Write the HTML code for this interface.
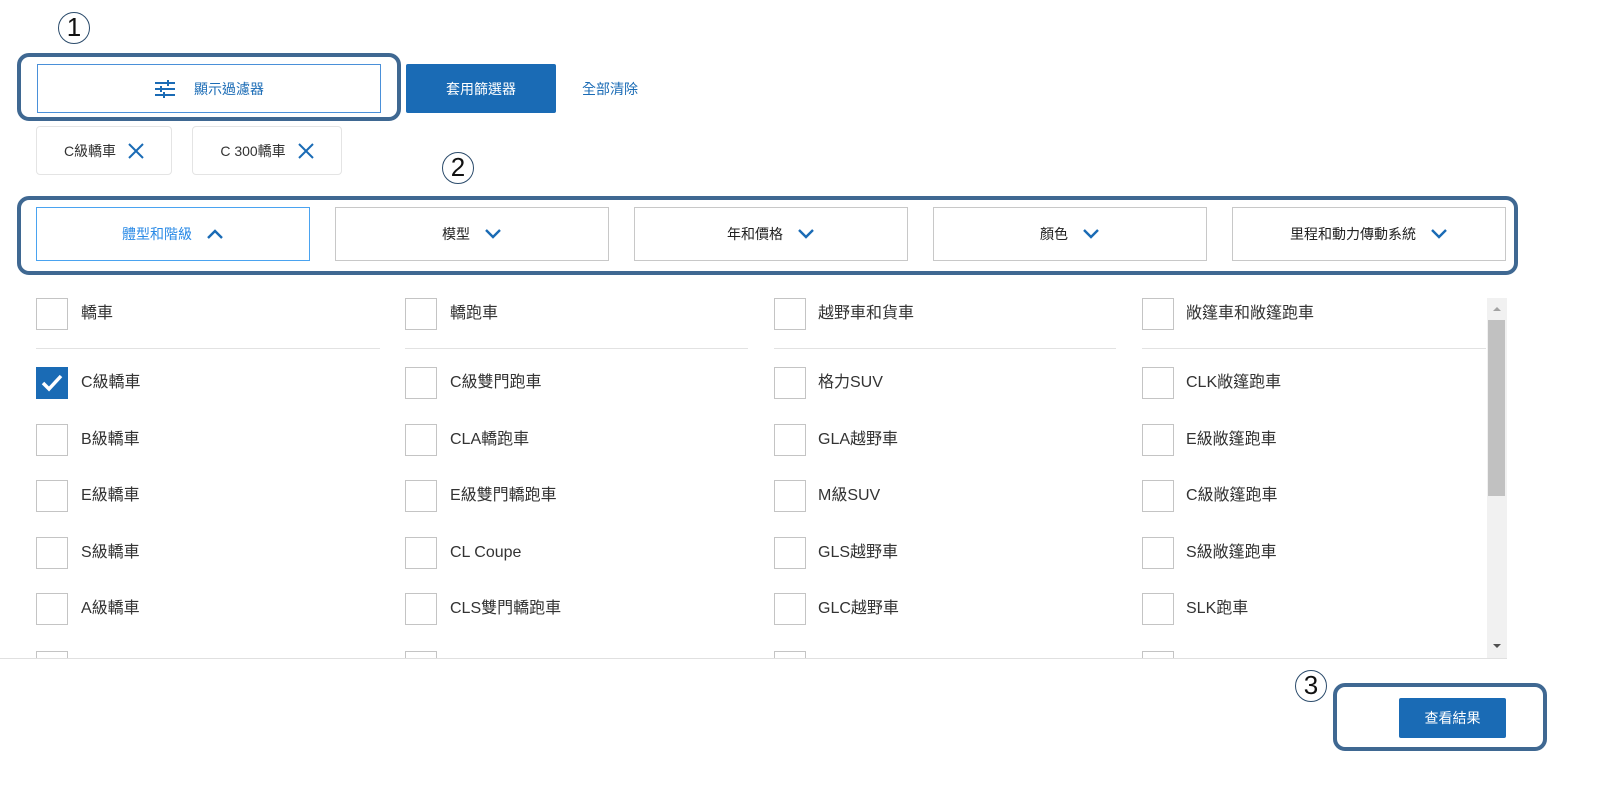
<!DOCTYPE html>
<html style="overflow:hidden;width:1600px;height:795px"><head><meta charset="utf-8"><style>
*{margin:0;padding:0;box-sizing:border-box}
body{width:1600px;height:795px;background:#fff;position:relative;overflow:hidden;font-family:"Liberation Sans","Noto Sans CJK TC",sans-serif;color:#333}
.a{position:absolute}
.ann{position:absolute;border:4px solid #3f6892;border-radius:12px}
.circ{position:absolute;width:32px;height:32px;border:1.5px solid #2b4b6b;border-radius:50%;text-align:center;font-size:26px;line-height:29px;color:#111}
.btn{position:absolute;display:flex;align-items:center;justify-content:center;font-size:14px}
.tab{position:absolute;top:207px;height:54px;width:274px;border:1px solid #c8c8c8;display:flex;align-items:center;justify-content:center;font-size:14px;color:#222;gap:14px}
.tab svg{width:18px;height:12px}
.cb{position:absolute;width:32px;height:32px;border:1px solid #c4c4c4;background:#fff}
.lb{position:absolute;font-size:16px;color:#333;line-height:20px}
.hr{position:absolute;top:348px;height:1px;background:#e2e2e2}
</style></head><body>
<div class="circ" style="left:58px;top:12px">1</div>
<div class="circ" style="left:442px;top:152px">2</div>
<div class="circ" style="left:1295px;top:670px">3</div>
<div class="ann" style="left:17px;top:53px;width:384px;height:68px"></div>
<div class="btn" style="left:37px;top:64px;width:344px;height:49px;border:1px solid #4a90d9;color:#1a6bb5;gap:18px">
<svg width="22" height="18" viewBox="0 0 22 18"><g stroke="#1a6bb5" stroke-width="2"><line x1="1" y1="3" x2="21" y2="3"/><line x1="1" y1="9" x2="21" y2="9"/><line x1="1" y1="15" x2="21" y2="15"/><line x1="14" y1="0" x2="14" y2="6"/><line x1="7" y1="6" x2="7" y2="12"/><line x1="10" y1="12" x2="10" y2="18"/></g></svg><span>顯示過濾器</span></div>
<div class="btn" style="left:406px;top:64px;width:150px;height:49px;background:#1a6bb5;color:#fff;border-radius:2px">套用篩選器</div>
<div class="a" style="left:582px;top:79px;font-size:14px;color:#1a6bb5">全部清除</div>
<div class="btn" style="left:36px;top:126px;width:136px;height:49px;border:1px solid #e4e4e4;border-radius:4px;gap:12px">C級轎車<svg width="16" height="16" viewBox="0 0 16 16"><path d="M1 1L15 15M15 1L1 15" stroke="#1a6bb5" stroke-width="2"/></svg></div>
<div class="btn" style="left:192px;top:126px;width:150px;height:49px;border:1px solid #e4e4e4;border-radius:4px;gap:12px">C 300轎車<svg width="16" height="16" viewBox="0 0 16 16"><path d="M1 1L15 15M15 1L1 15" stroke="#1a6bb5" stroke-width="2"/></svg></div>
<div class="ann" style="left:17px;top:196px;width:1501px;height:79px"></div>
<div class="tab" style="left:36px;border-color:#4aa3f0;color:#2a8ae6">體型和階級<svg viewBox="0 0 18 12"><path d="M2 10L9 3L16 10" fill="none" stroke="#1a6bb5" stroke-width="2.4"/></svg></div>
<div class="tab" style="left:335px">模型<svg viewBox="0 0 18 12"><path d="M2 2L9 9L16 2" fill="none" stroke="#1a6bb5" stroke-width="2.4"/></svg></div>
<div class="tab" style="left:634px">年和價格<svg viewBox="0 0 18 12"><path d="M2 2L9 9L16 2" fill="none" stroke="#1a6bb5" stroke-width="2.4"/></svg></div>
<div class="tab" style="left:933px">顏色<svg viewBox="0 0 18 12"><path d="M2 2L9 9L16 2" fill="none" stroke="#1a6bb5" stroke-width="2.4"/></svg></div>
<div class="tab" style="left:1232px">里程和動力傳動系統<svg viewBox="0 0 18 12"><path d="M2 2L9 9L16 2" fill="none" stroke="#1a6bb5" stroke-width="2.4"/></svg></div>

<div class="a" style="left:0;top:290px;width:1600px;height:368px;overflow:hidden">
<div style="position:absolute;left:0;top:-290px;width:1600px;height:658px">
<div class="hr" style="left:36px;width:344px"></div>
<div class="hr" style="left:405px;width:343px"></div>
<div class="hr" style="left:774px;width:342px"></div>
<div class="hr" style="left:1142px;width:344px"></div>
<div class="cb" style="left:36px;top:298px"></div><div class="lb" style="left:81px;top:304px">轎車</div>
<div class="cb" style="left:405px;top:298px"></div><div class="lb" style="left:450px;top:304px">轎跑車</div>
<div class="cb" style="left:774px;top:298px"></div><div class="lb" style="left:818px;top:304px">越野車和貨車</div>
<div class="cb" style="left:1142px;top:298px"></div><div class="lb" style="left:1186px;top:304px">敞篷車和敞篷跑車</div>

<div class="cb" style="left:36px;top:367px;background:#1a6bb5;border-color:#1a6bb5"><svg width="30" height="30" viewBox="0 0 30 30"><path d="M6 15L12 21L24 8" fill="none" stroke="#fff" stroke-width="3.5"/></svg></div><div class="lb" style="left:81px;top:373px">C級轎車</div>
<div class="cb" style="left:405px;top:367px"></div><div class="lb" style="left:450px;top:373px">C級雙門跑車</div>
<div class="cb" style="left:774px;top:367px"></div><div class="lb" style="left:818px;top:373px">格力SUV</div>
<div class="cb" style="left:1142px;top:367px"></div><div class="lb" style="left:1186px;top:373px">CLK敞篷跑車</div>

<div class="cb" style="left:36px;top:424px"></div><div class="lb" style="left:81px;top:430px">B級轎車</div>
<div class="cb" style="left:405px;top:424px"></div><div class="lb" style="left:450px;top:430px">CLA轎跑車</div>
<div class="cb" style="left:774px;top:424px"></div><div class="lb" style="left:818px;top:430px">GLA越野車</div>
<div class="cb" style="left:1142px;top:424px"></div><div class="lb" style="left:1186px;top:430px">E級敞篷跑車</div>

<div class="cb" style="left:36px;top:480px"></div><div class="lb" style="left:81px;top:486px">E級轎車</div>
<div class="cb" style="left:405px;top:480px"></div><div class="lb" style="left:450px;top:486px">E級雙門轎跑車</div>
<div class="cb" style="left:774px;top:480px"></div><div class="lb" style="left:818px;top:486px">M級SUV</div>
<div class="cb" style="left:1142px;top:480px"></div><div class="lb" style="left:1186px;top:486px">C級敞篷跑車</div>

<div class="cb" style="left:36px;top:537px"></div><div class="lb" style="left:81px;top:543px">S級轎車</div>
<div class="cb" style="left:405px;top:537px"></div><div class="lb" style="left:450px;top:543px">CL Coupe</div>
<div class="cb" style="left:774px;top:537px"></div><div class="lb" style="left:818px;top:543px">GLS越野車</div>
<div class="cb" style="left:1142px;top:537px"></div><div class="lb" style="left:1186px;top:543px">S級敞篷跑車</div>

<div class="cb" style="left:36px;top:593px"></div><div class="lb" style="left:81px;top:599px">A級轎車</div>
<div class="cb" style="left:405px;top:593px"></div><div class="lb" style="left:450px;top:599px">CLS雙門轎跑車</div>
<div class="cb" style="left:774px;top:593px"></div><div class="lb" style="left:818px;top:599px">GLC越野車</div>
<div class="cb" style="left:1142px;top:593px"></div><div class="lb" style="left:1186px;top:599px">SLK跑車</div>

<div class="cb" style="left:36px;top:651px;height:7px;border-bottom:none"></div>
<div class="cb" style="left:405px;top:651px;height:7px;border-bottom:none"></div>
<div class="cb" style="left:774px;top:651px;height:7px;border-bottom:none"></div>
<div class="cb" style="left:1142px;top:651px;height:7px;border-bottom:none"></div>
</div></div>
<div class="a" style="left:1487px;top:298px;width:20px;height:360px;background:#f1f1f1"></div>
<div class="a" style="left:1488px;top:320px;width:17px;height:176px;background:#c1c1c1"></div>
<svg class="a" style="left:1490px;top:304px" width="14" height="8"><path d="M3 7L7 3L11 7Z" fill="#a3a3a3"/></svg>
<svg class="a" style="left:1490px;top:642px" width="14" height="8"><path d="M3 2L7 6L11 2Z" fill="#505050"/></svg>
<div class="a" style="left:0;top:658px;width:1507px;height:1px;background:#e0e0e0"></div>
<div class="ann" style="left:1333px;top:683px;width:214px;height:68px"></div>
<div class="btn" style="left:1399px;top:698px;width:107px;height:40px;background:#1a6bb5;color:#fff;border-radius:2px">查看結果</div>
</body></html>
